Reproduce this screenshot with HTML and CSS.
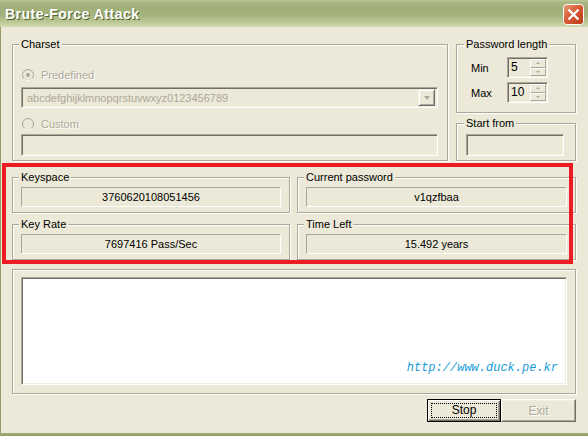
FILE: index.html
```html
<!DOCTYPE html>
<html>
<head>
<meta charset="utf-8">
<link rel="stylesheet" href="styles.css">
</head>
<body>
<div class="window">
  <div class="titlebar">
    <span class="title">Brute-Force Attack</span>
    <span class="close">
      <svg width="21" height="21" viewBox="0 0 21 21">
        <defs>
          <linearGradient id="cg" x1="0" y1="0" x2="1" y2="1">
            <stop offset="0" stop-color="#E9A07E"/>
            <stop offset="0.45" stop-color="#D95A33"/>
            <stop offset="1" stop-color="#B9391A"/>
          </linearGradient>
        </defs>
        <rect x="0.5" y="0.5" width="20" height="20" rx="3" fill="url(#cg)" stroke="#fff"/>
        <path d="M5.5 5.5L15.5 15.5M15.5 5.5L5.5 15.5" stroke="#fff" stroke-width="2.4"/>
      </svg>
    </span>
  </div>
  <div class="client">
    <div class="top-row">
      <fieldset class="group charset">
        <legend>Charset</legend>
        <div class="radio first">
          <svg class="radio-ico" width="12" height="12" viewBox="0 0 12 12">
            <circle cx="6" cy="6" r="5.5" fill="#ECE9D8" stroke="#ACA899"/>
            <path d="M10 10A5.5 5.5 0 0 1 2 10" fill="none" stroke="#fff"/>
            <circle cx="6" cy="6" r="2" fill="#ACA899"/>
          </svg>
          <span>Predefined</span>
        </div>
        <div class="combo">
          <span class="combo-text">abcdefghijklmnopqrstuvwxyz0123456789</span>
          <span class="combo-btn"><span class="arrow-down"></span></span>
        </div>
        <div class="radio second">
          <svg class="radio-ico" width="12" height="12" viewBox="0 0 12 12">
            <circle cx="6" cy="6" r="5.5" fill="#ECE9D8" stroke="#ACA899"/>
            <path d="M10 10A5.5 5.5 0 0 1 2 10" fill="none" stroke="#fff"/>
          </svg>
          <span>Custom</span>
        </div>
        <div class="edit custom"></div>
      </fieldset>
      <div class="side">
        <fieldset class="group pwlen">
          <legend>Password length</legend>
          <div class="spin-row">
            <span class="spin-label">Min</span>
            <div class="spin">
              <span class="spin-val">5</span>
              <span class="spin-btns"><span class="sbtn up"></span><span class="sbtn down"></span></span>
            </div>
          </div>
          <div class="spin-row">
            <span class="spin-label">Max</span>
            <div class="spin">
              <span class="spin-val">10</span>
              <span class="spin-btns"><span class="sbtn up"></span><span class="sbtn down"></span></span>
            </div>
          </div>
        </fieldset>
        <fieldset class="group startfrom">
          <legend>Start from</legend>
          <div class="edit start"></div>
        </fieldset>
      </div>
    </div>
    <div class="stats">
      <fieldset class="group stat">
        <legend>Keyspace</legend>
        <div class="value">3760620108051456</div>
      </fieldset>
      <fieldset class="group stat">
        <legend>Current password</legend>
        <div class="value">v1qzfbaa</div>
      </fieldset>
      <fieldset class="group stat">
        <legend>Key Rate</legend>
        <div class="value">7697416 Pass/Sec</div>
      </fieldset>
      <fieldset class="group stat">
        <legend>Time Left</legend>
        <div class="value">15.492 years</div>
      </fieldset>
    </div>
    <div class="output-group">
      <div class="output"><span class="url">http://www.duck.pe.kr</span></div>
    </div>
    <div class="buttons">
      <button class="btn default"><span class="focus">Stop</span></button>
      <button class="btn exit" disabled>Exit</button>
    </div>
  </div>
  <div class="frame-bottom"></div>
  <div class="highlight"></div>
</div>
</body>
</html>
```
FILE: styles.css
```css
* { box-sizing: border-box; }
html, body { margin: 0; padding: 0; background: #ECE9D8; }

.window {
  position: relative;
  width: 588px;
  height: 436px;
  display: flex;
  flex-direction: column;
  background: #ECE9D8;
  font: 11px "Liberation Sans", Arial, sans-serif;
  color: #000;
  overflow: hidden;
}

.titlebar {
  flex: none;
  height: 27px;
  display: flex;
  align-items: center;
  padding: 0 4px 0 5px;
  background: linear-gradient(180deg, #BCC899 0px, #A9B882 2px, #A0AF77 9px, #A6B57E 16px, #B8C591 21px, #C9D2A5 25px, #D3DAB3 27px);
}
.title {
  flex: 1;
  font: bold 14px "Liberation Sans", Arial, sans-serif;
  letter-spacing: 0.5px;
  color: #fff;
  text-shadow: 1px 1px 0 #4F5E2C;
}
.close { width: 21px; height: 21px; display: block; margin-top: 1px; }
.close svg { display: block; }

.client {
  flex: 1;
  display: flex;
  flex-direction: column;
  border-left: 1px solid #8F9F62;
  padding: 11px 12px 0 11px;
}

.group {
  margin: 0;
  min-width: 0;
  border: 1px solid #ACA899;
  box-shadow: inset 1px 1px 0 #fff, 1px 1px 0 #fff;
}
.group legend {
  padding: 0 2px;
  margin-left: -2px;
  line-height: 13px;
  background: #ECE9D8;
}

.top-row { display: flex; gap: 8px; }

.charset { width: 436px; padding: 0 9px 4px 8px; }
.radio {
  display: flex;
  align-items: center;
  height: 14px;
  color: #ACA899;
  text-shadow: 1px 1px 0 #fff;
}
.radio.first { margin-top: 17px; }
.radio.second { margin-top: 9px; }
.radio-ico { display: block; margin: 0 7px 0 1px; }

.combo {
  margin-top: 5px;
  height: 21px;
  display: flex;
  border: 1px solid;
  border-color: #ACA899 #fff #fff #ACA899;
  box-shadow: inset 1px 1px 0 #716F64, inset -1px -1px 0 #F1EFE2;
  padding: 2px;
}
.combo-text {
  flex: 1;
  padding-left: 3px;
  line-height: 17px;
  color: #ACA899;
}
.combo-btn {
  width: 17px;
  display: flex;
  align-items: center;
  justify-content: center;
  margin: -1px 0;
  border: 1px solid;
  border-color: #F1EFE2 #716F64 #716F64 #F1EFE2;
  box-shadow: inset 1px 1px 0 #fff, inset -1px -1px 0 #ACA899;
}
.arrow-down {
  width: 0; height: 0;
  border-left: 3.5px solid transparent;
  border-right: 3.5px solid transparent;
  border-top: 4px solid #ACA899;
}

.edit {
  height: 22px;
  border: 1px solid;
  border-color: #ACA899 #fff #fff #ACA899;
  box-shadow: inset 1px 1px 0 #716F64, inset -1px -1px 0 #F1EFE2;
  background: #ECE9D8;
}
.edit.custom { margin-top: 3px; }

.side { width: 120px; display: flex; flex-direction: column; gap: 4px; }
.pwlen { padding: 6px 0 9px 14px; }
.pwlen legend { margin-left: -7px; }
.spin-row { display: flex; align-items: center; height: 21px; }
.spin-row + .spin-row { margin-top: 4px; }
.spin-label { width: 36px; }
.spin {
  width: 41px;
  height: 21px;
  display: flex;
  border: 1px solid;
  border-color: #ACA899 #fff #fff #ACA899;
  box-shadow: inset 1px 1px 0 #716F64, inset -1px -1px 0 #F1EFE2;
  padding: 1px 1px 1px 2px;
}
.spin-val { flex: 1; font-size: 12px; line-height: 17px; padding-left: 1px; }
.spin-btns { width: 16px; display: flex; flex-direction: column; }
.sbtn {
  flex: 1;
  display: flex;
  align-items: center;
  justify-content: center;
  border: 1px solid;
  border-color: #fff #ACA899 #ACA899 #fff;
  background: #ECE9D8;
}
.sbtn::after {
  content: "";
  width: 0; height: 0;
  border-left: 2px solid transparent;
  border-right: 2px solid transparent;
}
.sbtn.up::after { border-bottom: 2px solid #ACA899; }
.sbtn.down::after { border-top: 2px solid #ACA899; }

.startfrom { padding: 4px 9px 4px 9px; }
.edit.start { width: 98px; }

.stats {
  margin-top: 10px;
  display: grid;
  grid-template-columns: 278px 279px;
  column-gap: 7px;
  row-gap: 5px;
}
.stat { padding: 3px 8px 5px 8px; }
.value {
  height: 20px;
  border: 1px solid;
  border-color: #ACA899 #fff #fff #ACA899;
  text-align: center;
  line-height: 19px;
}

.output-group {
  margin-top: 9px;
  border: 1px solid #ACA899;
  box-shadow: inset 1px 1px 0 #fff, 1px 1px 0 #fff;
  padding: 7px 8px 8px 8px;
}
.output {
  height: 108px;
  background: #fff;
  border: 1px solid;
  border-color: #ACA899 #fff #fff #ACA899;
  box-shadow: inset 1px 1px 0 #716F64, inset -1px -1px 0 #F1EFE2;
  display: flex;
  align-items: flex-end;
  justify-content: flex-end;
  padding: 0 8px 9px 0;
}
.url {
  font: italic 12px/14px "Liberation Mono", "Courier New", monospace;
  color: #179BD7;
}

.buttons { margin-top: 5px; display: flex; justify-content: flex-end; }
.btn {
  height: 23px;
  width: 75px;
  padding: 0;
  font: 11px "Liberation Sans", Arial, sans-serif;
  color: #000;
  background: #ECE9D8;
  border: 1px solid;
  border-color: #fff #716F64 #716F64 #fff;
  box-shadow: inset -1px -1px 0 #ACA899, inset 1px 1px 0 #F1EFE2;
}
.btn.default {
  width: 74px;
  display: flex;
  border-color: #000;
  box-shadow: inset 1px 1px 0 #fff, inset -1px -1px 0 #716F64, inset -2px -2px 0 #ACA899;
}
.focus {
  flex: 1;
  margin: 3px 3px 3px 3px;
  border: 1px dotted #000;
  line-height: 13px;
  font-size: 12px;
}
.btn.exit { color: #ACA899; text-shadow: 1px 1px 0 #fff; font-size: 12px; }

.frame-bottom {
  flex: none;
  height: 3px;
  background: linear-gradient(180deg, #A4B27B, #8A9A5C);
}

.highlight {
  position: absolute;
  left: 2px;
  top: 163px;
  width: 571px;
  height: 101px;
  border: 4px solid #ED1C24;
  pointer-events: none;
}
```
